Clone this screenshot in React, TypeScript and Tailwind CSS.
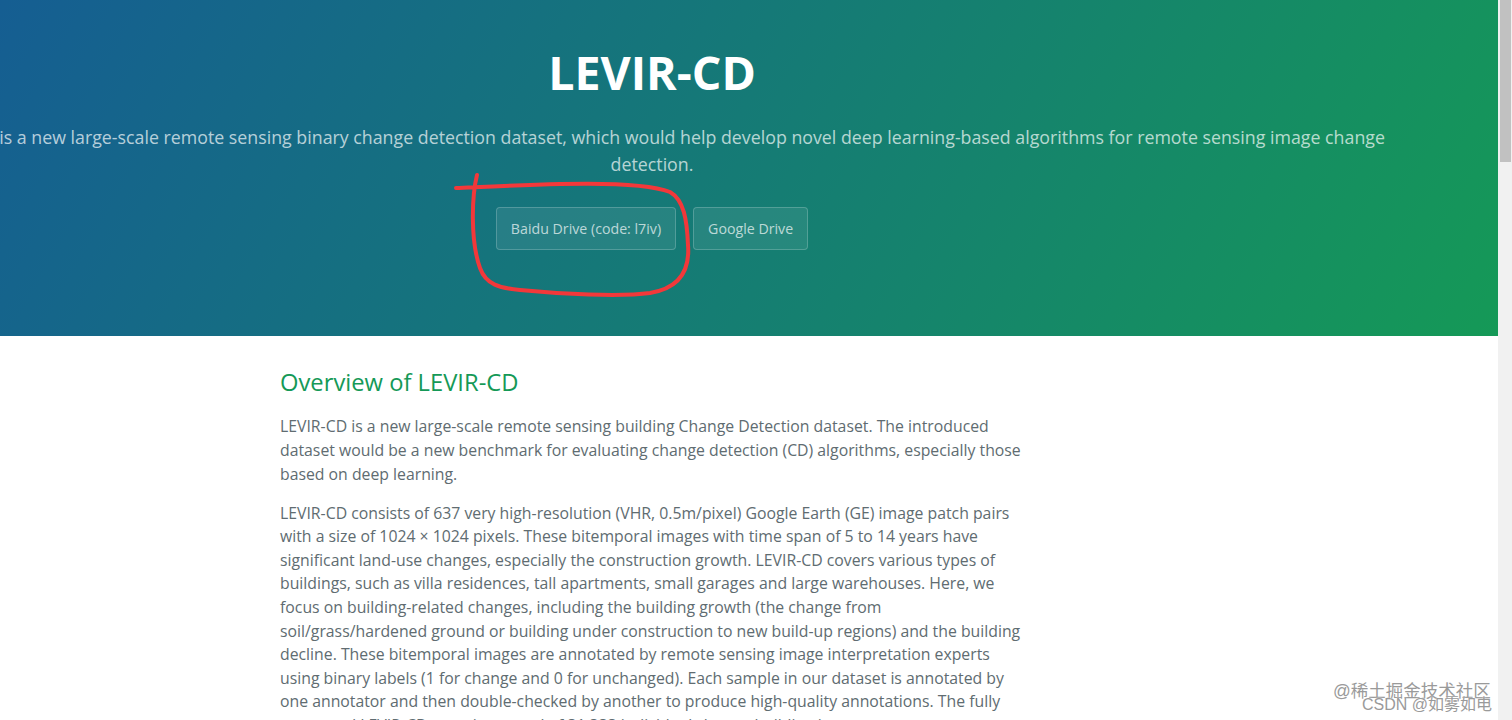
const Header = () => (
  <div className="bg-[linear-gradient(120deg,#155799,#159957)] px-[86px] pt-[38px] pb-[72px] text-center text-white">
    <h1 className="text-[46.5px] font-bold leading-[1.5]">LEVIR-CD</h1>
    <h2 className="mt-[16px] text-[17.8px] leading-[27px] font-normal text-white/70">
      LEVIR-CD is a new large-scale remote sensing binary change detection dataset, which would help
      develop novel deep learning-based algorithms for remote sensing image change detection.
    </h2>
    <div className="mt-[29px] mb-[14px] flex justify-center gap-[17px] text-[14.2px] leading-[21px] text-white/70">
      <a className="rounded-[4px] border border-white/20 bg-white/[0.08] px-[14px] py-[10px]">
        Baidu Drive (code: l7iv)
      </a>
      <a className="rounded-[4px] border border-white/20 bg-white/[0.08] px-[14px] py-[10px]">
        Google Drive
      </a>
    </div>
  </div>
);

const Overview = () => (
  <div className="mx-auto w-[922px] pr-[83px] pl-[89px] pt-[29px] text-[#606c71]">
    <h2 className="text-[23.76px] leading-[1.5] font-normal text-[#159957]">Overview of LEVIR-CD</h2>
    <p className="mt-[15px] text-[15.8px] leading-[23.76px]">
      LEVIR-CD is a new large-scale remote sensing building Change Detection dataset. The introduced
      dataset would be a new benchmark for evaluating change detection (CD) algorithms, especially
      those based on deep learning.
    </p>
    <p className="mt-[15px] text-[15.8px] leading-[23.6px]">
      LEVIR-CD consists of 637 very high-resolution (VHR, 0.5m/pixel) Google Earth (GE) image patch
      pairs with a size of 1024 × 1024 pixels. These bitemporal images with time span of 5 to 14 years
      have significant land-use changes, especially the construction growth. LEVIR-CD covers various
      types of buildings, such as villa residences, tall apartments, small garages and large
      warehouses. Here, we focus on building-related changes, including the building growth (the
      change from soil/grass/hardened ground or building under construction to new build-up regions)
      and the building decline. These bitemporal images are annotated by remote sensing image
      interpretation experts using binary labels (1 for change and 0 for unchanged). Each sample in
      our dataset is annotated by one annotator and then double-checked by another to produce
      high-quality annotations. The fully annotated LEVIR-CD contains a total of 31,333 individual
      change-building instances.
    </p>
  </div>
);

export default function App() {
  return (
    <div className="flex h-[720px] w-[1512px] overflow-hidden bg-white font-['Open_Sans',sans-serif]">
      <div className="relative flex-1 overflow-hidden">
        <div className="-ml-[194px] w-[1692px]">
          <Header />
          <Overview />
        </div>

        {/* hand-drawn red mark around the Baidu button */}
        <svg className="pointer-events-none absolute inset-0" width="1498" height="720">
          <path
            d="M477 175 C472 195, 470 240, 480 268 C486 285, 500 288, 520 290 C560 294, 620 297, 650 293 C680 288, 690 270, 688 245 C687 220, 684 200, 670 192 C650 184, 600 183, 560 184 C520 185, 480 187, 456 188"
            fill="none"
            stroke="#f2383a"
            strokeWidth="4"
            strokeLinecap="round"
            strokeLinejoin="round"
          />
        </svg>

        <div className="pointer-events-none absolute top-[680px] left-[1333px] text-[17.5px] leading-[22px] text-[#9a9a9a] font-['Liberation_Sans','Noto_Sans_CJK_SC',sans-serif] [text-shadow:0_0_2px_#fff]">
          @稀土掘金技术社区
        </div>
        <div className="pointer-events-none absolute top-[694px] left-[1362px] text-[16px] leading-[22px] text-[#9a9a9a] font-['Liberation_Sans','Noto_Sans_CJK_SC',sans-serif] [text-shadow:0_0_2px_#fff]">
          CSDN @如雾如电
        </div>
      </div>

      {/* scrollbar */}
      <div className="w-[14px] bg-[#f1f1f1]">
        <div className="ml-[2px] h-[162px] w-[11px] bg-[#c1c1c1]" />
      </div>
    </div>
  );
}
